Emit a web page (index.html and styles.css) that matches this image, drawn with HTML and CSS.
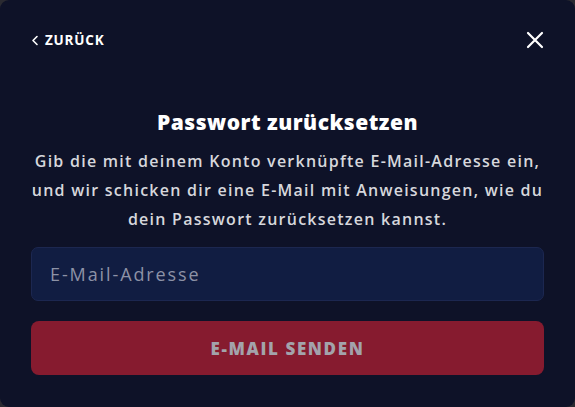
FILE: index.html
```html
<!DOCTYPE html>
<html lang="de">
<head>
<meta charset="utf-8">
<title>Passwort zurücksetzen</title>
<link rel="stylesheet" href="styles.css">
</head>
<body>
<div class="panel">
  <div class="topbar">
    <a class="back" href="#">
      <svg class="chev" width="8" height="11" viewBox="0 0 8 11"><path d="M6 1.5 L2 5.5 L6 9.5" fill="none" stroke="#ffffff" stroke-width="1.6" stroke-linecap="round" stroke-linejoin="round"/></svg>
      <span>ZURÜCK</span>
    </a>
    <button class="close" aria-label="Schließen">
      <svg width="18" height="18" viewBox="0 0 18 18"><path d="M2 2 L16 16 M16 2 L2 16" stroke="#ffffff" stroke-width="2.2" stroke-linecap="round"/></svg>
    </button>
  </div>
  <h1 class="title">Passwort zurücksetzen</h1>
  <p class="desc">Gib die mit deinem Konto verknüpfte E-Mail-Adresse ein,<br>und wir schicken dir eine E-Mail mit Anweisungen, wie du<br>dein Passwort zurücksetzen kannst.</p>
  <input class="email" type="email" placeholder="E-Mail-Adresse">
  <button class="send">E-MAIL SENDEN</button>
</div>
</body>
</html>
```
FILE: styles.css
```css
html, body {
  margin: 0;
  padding: 0;
  width: 575px;
  height: 407px;
  background: #2a2a31;
  overflow: hidden;
}
.panel {
  box-sizing: border-box;
  width: 575px;
  height: 407px;
  border-radius: 9px;
  background: #0e1228;
  padding: 0 31px 0 31px;
  display: flex;
  flex-direction: column;
  font-family: "Open Sans", "Noto Sans", sans-serif;
  color: #ffffff;
}
.topbar {
  display: flex;
  justify-content: space-between;
  align-items: center;
  height: 80px;
}
.back {
  display: flex;
  align-items: center;
  gap: 6px;
  color: #ffffff;
  text-decoration: none;
  font-weight: 700;
  font-size: 13.5px;
  letter-spacing: 0.8px;
}
.close {
  background: none;
  border: 0;
  padding: 0;
  margin-right: -3px;
  width: 24px;
  height: 24px;
  display: flex;
  align-items: center;
  justify-content: center;
}
.title {
  margin: 29px 0 0 0;
  text-align: center;
  font-size: 21px;
  font-weight: 800;
  line-height: 26px;
  letter-spacing: 0.5px;
}
.desc {
  margin: 12px 0 0 0;
  text-align: center;
  font-size: 16px;
  font-weight: 600;
  line-height: 29px;
  letter-spacing: 1.25px;
  color: #d6d7dc;
  white-space: nowrap;
}
.email {
  box-sizing: border-box;
  margin-top: 13px;
  width: 513px;
  height: 54px;
  border-radius: 7px;
  border: 1px solid #1c2750;
  background: #111d42;
  padding: 0 18px;
  font-family: inherit;
  font-size: 18px;
  letter-spacing: 1.9px;
  color: #ffffff;
  outline: none;
}
.email::placeholder {
  color: #8d92a6;
}
.send {
  box-sizing: border-box;
  margin-top: 20px;
  width: 513px;
  height: 54px;
  border-radius: 8px;
  border: 0;
  background: #861b2f;
  color: #a3a3ab;
  font-family: inherit;
  font-weight: 800;
  font-size: 17px;
  letter-spacing: 1.6px;
}
```
